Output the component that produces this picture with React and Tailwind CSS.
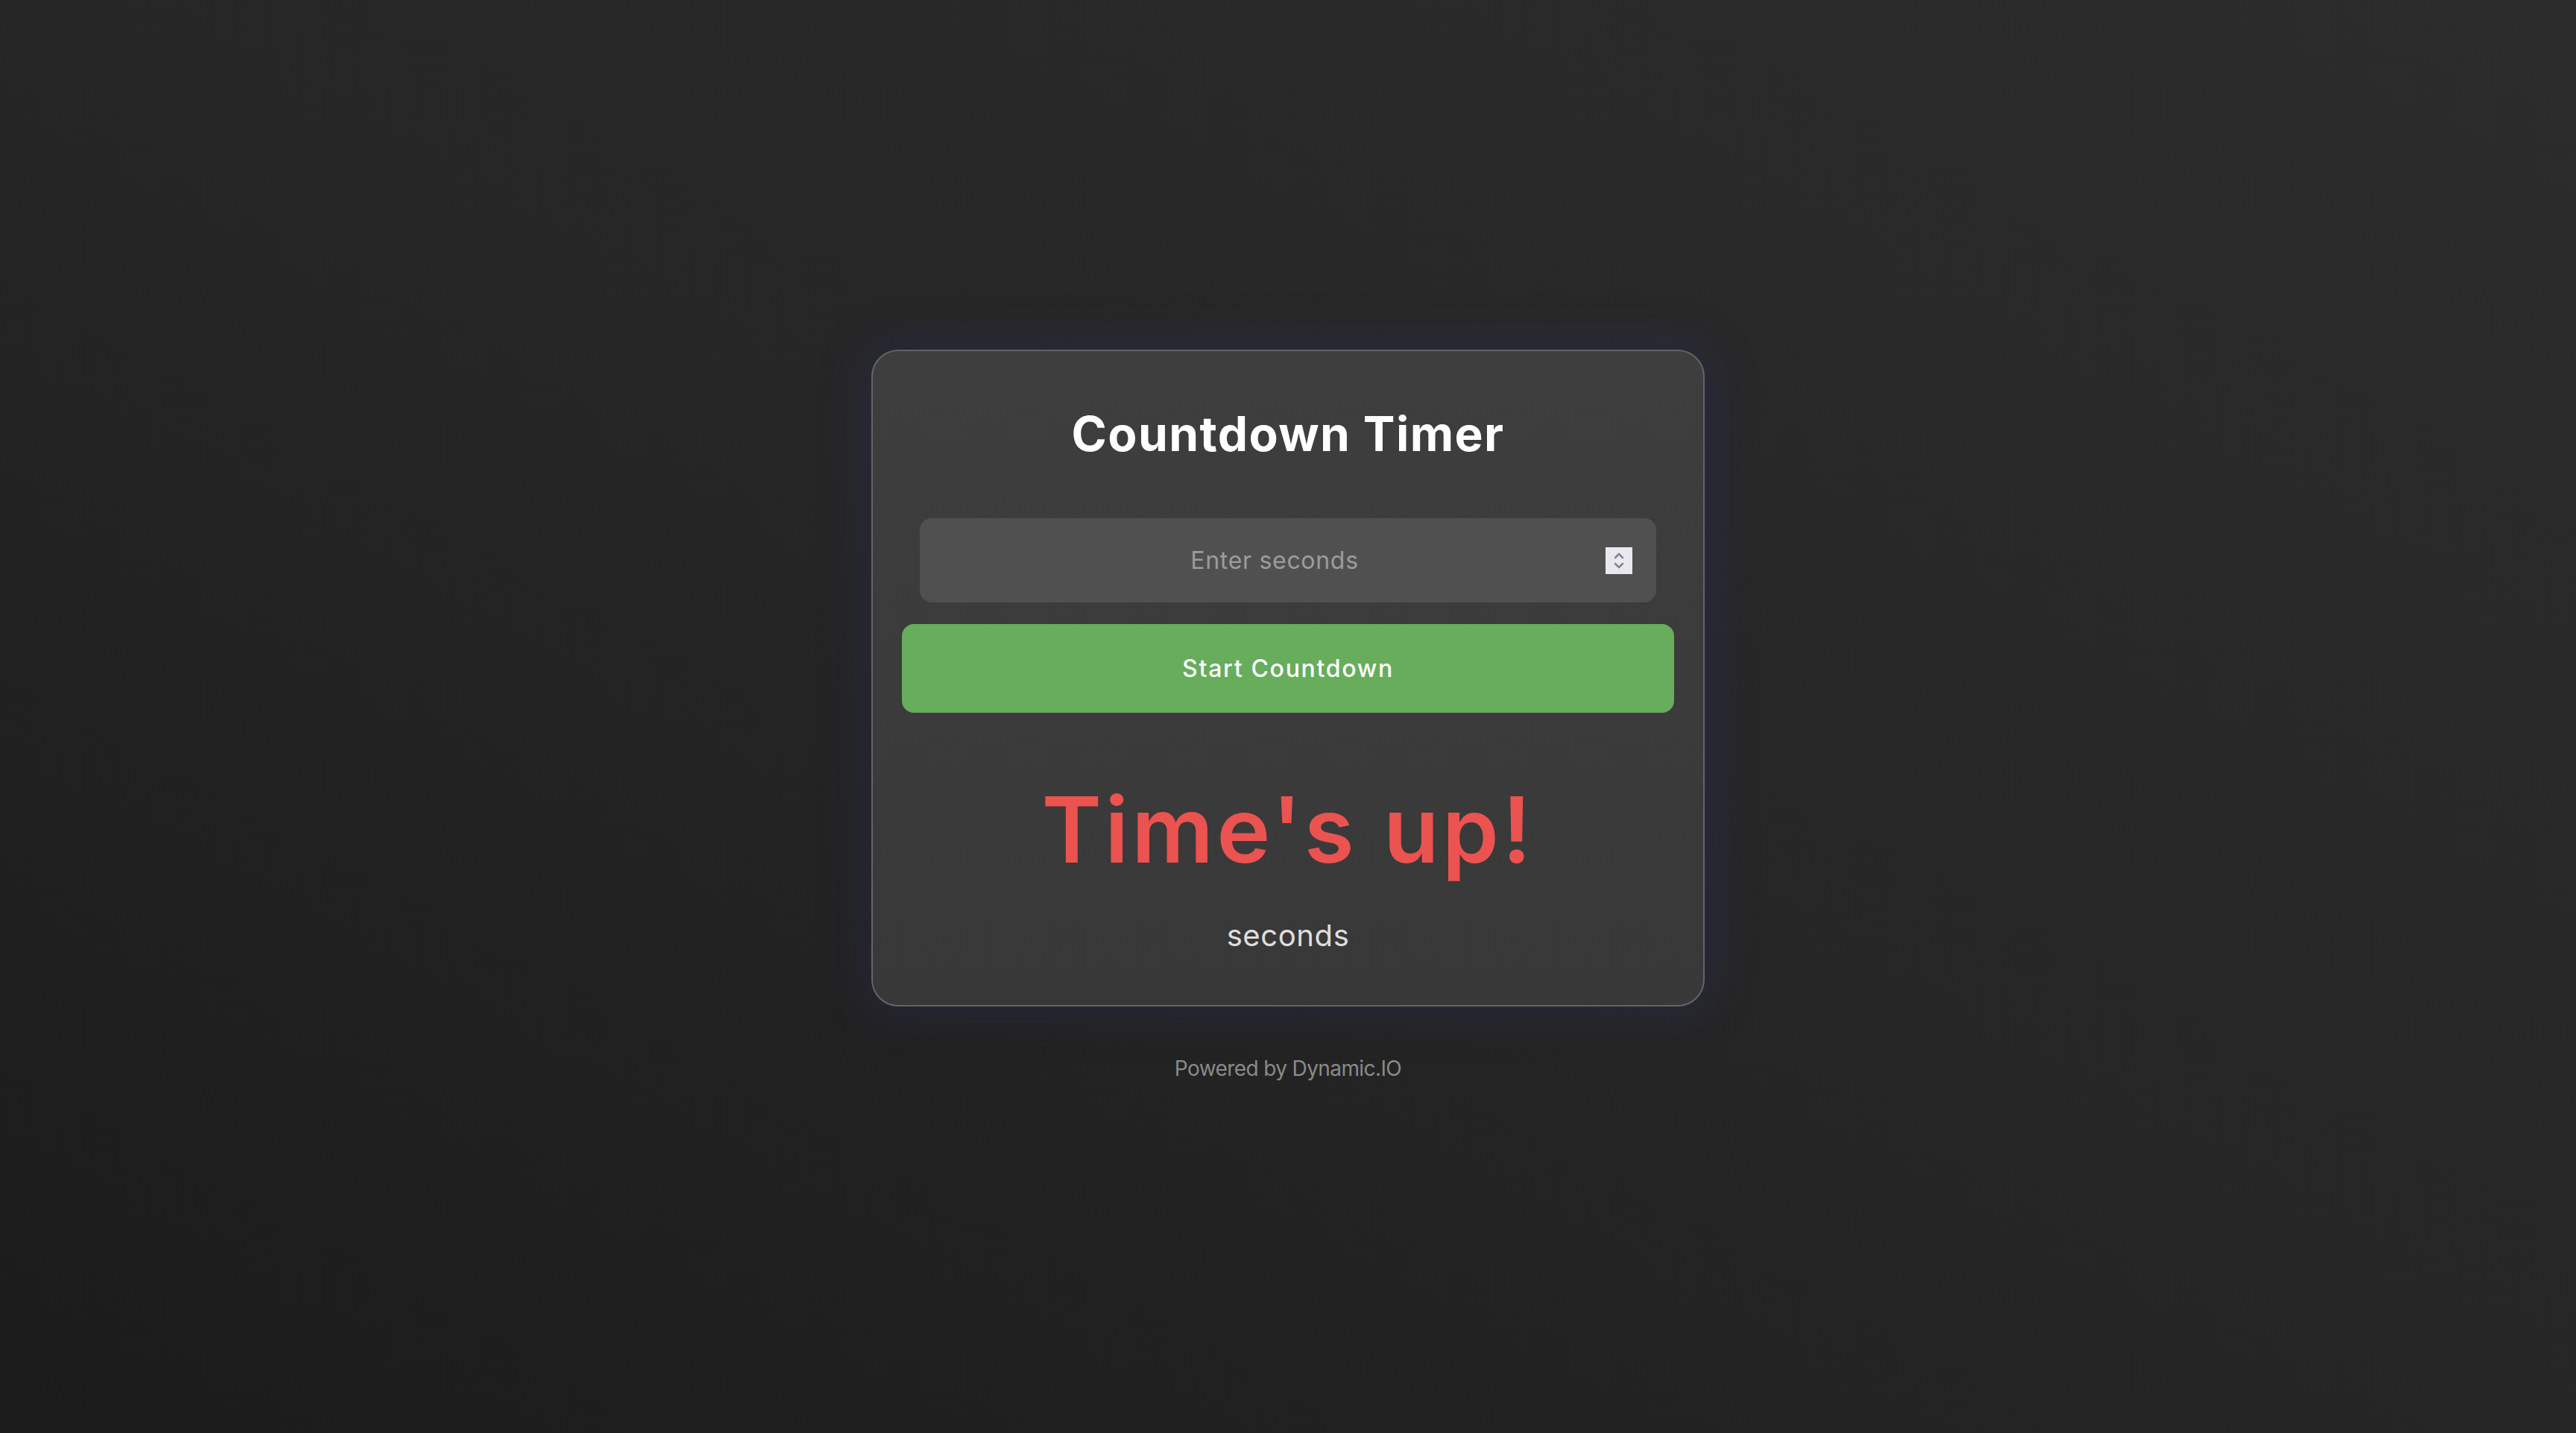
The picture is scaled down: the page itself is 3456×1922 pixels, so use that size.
export default function App() {
  return (
    <div
      className="min-h-screen w-full flex flex-col items-center justify-center bg-[linear-gradient(to_top_right,#1b1b1b,#262626_50%,#2c2c2c)]"
      style={{ fontFamily: 'Inter, "Noto Sans", sans-serif' }}
    >
      <div className="w-[1118px] rounded-[36px] border-2 border-[#646466] bg-[linear-gradient(to_bottom,#3e3e3e,#383838)] shadow-[0_0_60px_12px_rgba(45,45,120,0.28)] pt-[79px] pb-[73px] px-[39px] flex flex-col items-center">
        <h1 className="text-[64px] leading-none font-bold text-white tracking-[1.4px]">
          Countdown Timer
        </h1>
        <div className="mt-[81px] self-stretch mx-[24px] h-[113px] rounded-[16px] bg-[#505050] flex items-center px-[32px]">
          <input
            type="text"
            placeholder="Enter seconds"
            className="flex-1 min-w-0 bg-transparent text-center text-[32px] tracking-[0.7px] text-white placeholder:text-[#9c9c9c] outline-none"
          />
          <div className="w-[36px] h-[36px] bg-[#e9e8ee] flex items-center justify-center">
            <svg width="20" height="28" viewBox="0 0 20 28" fill="none" stroke="#85848f" strokeWidth="2.5" strokeLinecap="round" strokeLinejoin="round">
              <path d="M5 10 L10 5 L15 10" />
              <path d="M5 18 L10 23 L15 18" />
            </svg>
          </div>
        </div>
        <button className="mt-[29px] w-full h-[119px] rounded-[16px] bg-[#67ad5c] text-white text-[32px] tracking-[1.7px] font-medium">
          Start Countdown
        </button>
        <div className="mt-[96px] text-[122px] leading-none font-semibold tracking-[4.2px] text-[#eb5350]">
          Time's up!
        </div>
        <div className="mt-[61px] text-[40px] leading-none tracking-[0.6px] text-[#dedede]">seconds</div>
      </div>
      <p className="mt-[69px] pb-[6px] text-[28px] leading-none tracking-[-0.6px] text-[#8a8a8a]">Powered by Dynamic.IO</p>
    </div>
  );
}
